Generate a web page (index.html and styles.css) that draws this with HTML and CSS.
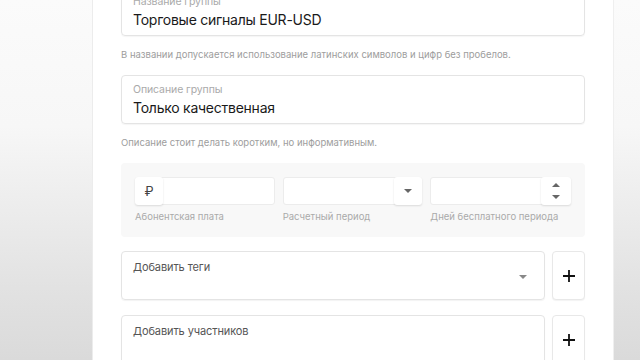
FILE: index.html
```html
<!DOCTYPE html>
<html>
  <head>
    <meta charset="utf-8">
    <title>Новая группа</title>
    <link rel="stylesheet" href="styles.css">
  </head>
  <body>
    <div class="layout">
      <aside class="side side-left"></aside>
      <main class="panel">
        <div class="form">
          <div class="field">
            <div class="field-label">Название группы</div>
            <div class="field-value">Торговые сигналы EUR-USD</div>
          </div>
          <p class="hint">В названии допускается использование латинских символов и цифр без пробелов.</p>

          <div class="field">
            <div class="field-label">Описание группы</div>
            <div class="field-value">Только качественная</div>
          </div>
          <p class="hint">Описание стоит делать коротким, но информативным.</p>

          <div class="pricing">
            <div class="price-col">
              <div class="mini-input">
                <span class="addon addon-left">₽</span>
                <span class="mini-fill"></span>
              </div>
              <div class="mini-label">Абонентская плата</div>
            </div>
            <div class="price-col">
              <div class="mini-input">
                <span class="mini-fill"></span>
                <span class="addon addon-right">
                  <svg width="10" height="6" viewBox="0 0 10 6"><path d="M1 1h8L5 5z" fill="#666"/></svg>
                </span>
              </div>
              <div class="mini-label">Расчетный период</div>
            </div>
            <div class="price-col">
              <div class="mini-input">
                <span class="mini-fill"></span>
                <span class="addon addon-right spinner">
                  <svg width="10" height="6" viewBox="0 0 10 6"><path d="M1 5h8L5 1z" fill="#666"/></svg>
                  <svg width="10" height="6" viewBox="0 0 10 6"><path d="M1 1h8L5 5z" fill="#666"/></svg>
                </span>
              </div>
              <div class="mini-label">Дней бесплатного периода</div>
            </div>
          </div>

          <div class="add-row">
            <div class="select-box">
              <span class="select-label">Добавить теги</span>
              <svg class="select-caret" width="10" height="6" viewBox="0 0 10 6"><path d="M1 1h8L5 5z" fill="#888"/></svg>
            </div>
            <button class="plus-btn">
              <svg width="14" height="14" viewBox="0 0 14 14"><path d="M7 1v12M1 7h12" stroke="#111" stroke-width="1.8"/></svg>
            </button>
          </div>

          <div class="add-row">
            <div class="select-box">
              <span class="select-label">Добавить участников</span>
            </div>
            <button class="plus-btn">
              <svg width="14" height="14" viewBox="0 0 14 14"><path d="M7 1v12M1 7h12" stroke="#111" stroke-width="1.8"/></svg>
            </button>
          </div>
        </div>
      </main>
      <aside class="side side-right"></aside>
    </div>
  </body>
</html>
```

FILE: styles.css
```css
html, body {
  margin: 0;
  height: 100%;
}
body {
  font-family: Inter, "Noto Sans", sans-serif;
  color: #1c1c1c;
  overflow: hidden;
}
.layout {
  display: flex;
  height: 360px;
}
.side {
  background: linear-gradient(#fbfbfb 0%, #f7f7f7 35%, #e2e2e2 80%, #dadada 100%);
}
.side-left {
  width: 92px;
  border-right: 1px solid #ececec;
}
.side-right {
  flex: 1;
  border-left: 1px solid #efefef;
}
.panel {
  width: 520px;
  background: #fff;
}
.form {
  margin: -13px 28px 0 28px;
}
.field {
  border: 1px solid #e4e4e4;
  border-radius: 4px;
  padding: 7px 11px 0;
  box-sizing: border-box;
  box-shadow: 0 1px 1px rgba(0, 0, 0, .04);
  height: 49px;
}
.field-label {
  font-size: 10.5px;
  letter-spacing: -0.1px;
  color: #aaa;
  line-height: 14px;
}
.field-value {
  font-size: 14px;
  letter-spacing: -0.25px;
  line-height: 20px;
  margin-top: 1px;
  color: #1a1a1a;
}
.hint {
  margin: 0;
  font-size: 9.5px;
  color: #9d9d9d;
  line-height: 14px;
  padding: 12px 0 13px;
}
.pricing {
  display: flex;
  gap: 8px;
  background: #f8f8f8;
  border-radius: 4px;
  padding: 14px 14px 14px;
}
.price-col {
  width: 140px;
}
.price-col:last-child {
  width: 141px;
}
.mini-input {
  display: flex;
  height: 28px;
  background: #fff;
  border: 1px solid #ececec;
  border-radius: 3px;
  box-sizing: border-box;
}
.mini-fill {
  flex: 1;
}
.addon {
  width: 28px;
  display: flex;
  align-items: center;
  justify-content: center;
  border-radius: 3px;
  box-shadow: 0 1px 2px rgba(0, 0, 0, .12);
  background: #fff;
  font-size: 13px;
  color: #444;
  margin: -1px;
  height: 28px;
}
.spinner {
  flex-direction: column;
  gap: 6px;
  width: 30px;
}
.mini-label {
  font-size: 9.5px;
  color: #aaa;
  margin-top: 6px;
  line-height: 12px;
}
.add-row {
  display: flex;
  gap: 7px;
  margin-top: 14px;
}
.add-row + .add-row {
  margin-top: 15px;
}
.select-box {
  flex: 1;
  position: relative;
  height: 49px;
  border: 1px solid #e4e4e4;
  border-radius: 4px;
  box-sizing: border-box;
  padding: 8px 11px;
  box-shadow: 0 1px 1px rgba(0, 0, 0, .05);
}
.select-label {
  display: block;
  font-size: 11px;
  line-height: 14px;
  letter-spacing: -0.1px;
  color: #555;
}
.select-caret {
  position: absolute;
  right: 16px;
  top: 22px;
}
.plus-btn {
  width: 33px;
  height: 49px;
  border: 1px solid #e8e8e8;
  border-radius: 4px;
  background: #fff;
  display: flex;
  align-items: center;
  justify-content: center;
  padding: 0;
  box-shadow: 0 1px 1px rgba(0, 0, 0, .05);
}
```
